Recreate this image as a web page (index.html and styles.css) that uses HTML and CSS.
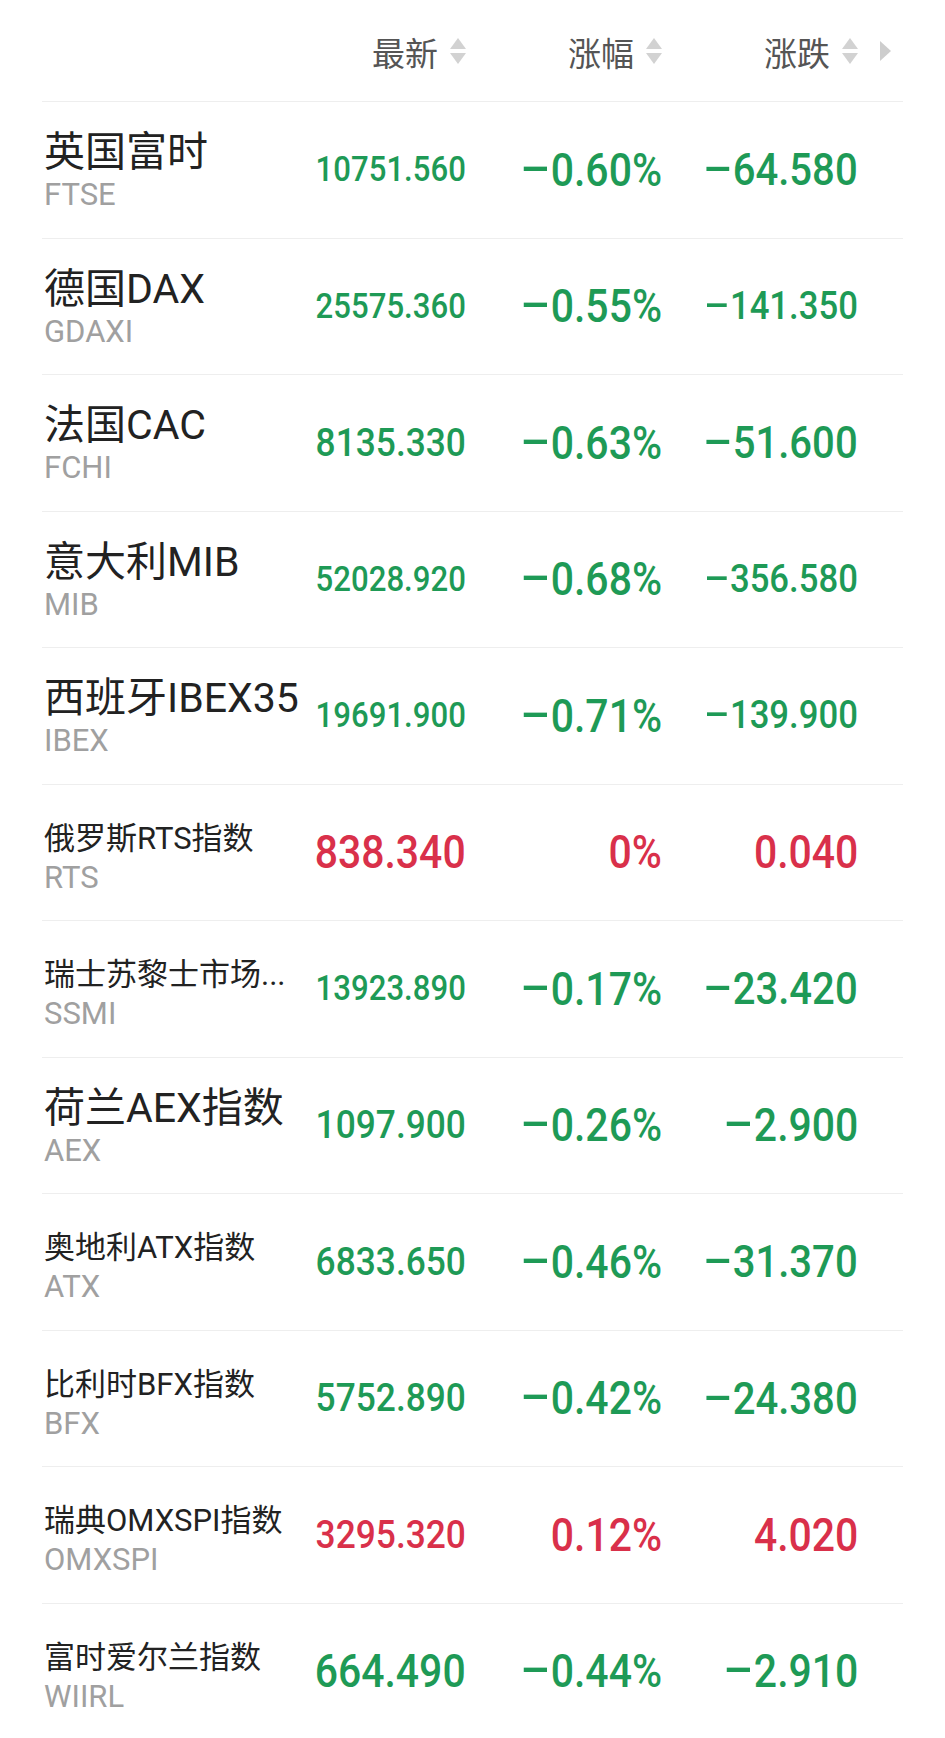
FILE: index.html
```html
<!DOCTYPE html>
<html lang="zh-CN">
<head>
<meta charset="utf-8">
<title>欧洲股指</title>
<link rel="stylesheet" href="styles.css">
</head>
<body>
<div class="board">
  <div class="header">
    <div></div>
    <div class="hcell"><span>最新</span><svg class="sort" viewBox="0 0 18 26" width="18" height="26"><polygon points="9,0 17,11 1,11"/><polygon points="1,15 17,15 9,26"/></svg></div>
    <div class="hcell"><span>涨幅</span><svg class="sort" viewBox="0 0 18 26" width="18" height="26"><polygon points="9,0 17,11 1,11"/><polygon points="1,15 17,15 9,26"/></svg></div>
    <div class="hcell"><span>涨跌</span><svg class="sort" viewBox="0 0 18 26" width="18" height="26"><polygon points="9,0 17,11 1,11"/><polygon points="1,15 17,15 9,26"/></svg></div>
    <svg class="more" viewBox="0 0 11 20" width="11" height="20"><polygon points="0,0 11,10 0,20"/></svg>
  </div>

  <div class="row down">
    <div class="title"><div class="name">英国富时</div><div class="code">FTSE</div></div>
    <div class="cell"><span class="v fs35">10751.560</span></div>
    <div class="cell"><span class="v"><span class="m">-</span>0.60%</span></div>
    <div class="cell"><span class="v fs45"><span class="m">-</span>64.580</span></div>
  </div>

  <div class="row down">
    <div class="title"><div class="name">德国DAX</div><div class="code">GDAXI</div></div>
    <div class="cell"><span class="v fs35">25575.360</span></div>
    <div class="cell"><span class="v"><span class="m">-</span>0.55%</span></div>
    <div class="cell"><span class="v fs39"><span class="m">-</span>141.350</span></div>
  </div>

  <div class="row down">
    <div class="title"><div class="name">法国CAC</div><div class="code">FCHI</div></div>
    <div class="cell"><span class="v fs40">8135.330</span></div>
    <div class="cell"><span class="v"><span class="m">-</span>0.63%</span></div>
    <div class="cell"><span class="v fs45"><span class="m">-</span>51.600</span></div>
  </div>

  <div class="row down">
    <div class="title"><div class="name">意大利MIB</div><div class="code">MIB</div></div>
    <div class="cell"><span class="v fs35">52028.920</span></div>
    <div class="cell"><span class="v"><span class="m">-</span>0.68%</span></div>
    <div class="cell"><span class="v fs39"><span class="m">-</span>356.580</span></div>
  </div>

  <div class="row down">
    <div class="title"><div class="name">西班牙IBEX35</div><div class="code">IBEX</div></div>
    <div class="cell"><span class="v fs35">19691.900</span></div>
    <div class="cell"><span class="v"><span class="m">-</span>0.71%</span></div>
    <div class="cell"><span class="v fs39"><span class="m">-</span>139.900</span></div>
  </div>

  <div class="row up">
    <div class="title"><div class="name sm">俄罗斯RTS指数</div><div class="code">RTS</div></div>
    <div class="cell"><span class="v">838.340</span></div>
    <div class="cell"><span class="v">0%</span></div>
    <div class="cell"><span class="v">0.040</span></div>
  </div>

  <div class="row down">
    <div class="title"><div class="name sm">瑞士苏黎士市场...</div><div class="code">SSMI</div></div>
    <div class="cell"><span class="v fs35">13923.890</span></div>
    <div class="cell"><span class="v"><span class="m">-</span>0.17%</span></div>
    <div class="cell"><span class="v fs45"><span class="m">-</span>23.420</span></div>
  </div>

  <div class="row down">
    <div class="title"><div class="name">荷兰AEX指数</div><div class="code">AEX</div></div>
    <div class="cell"><span class="v fs40">1097.900</span></div>
    <div class="cell"><span class="v"><span class="m">-</span>0.26%</span></div>
    <div class="cell"><span class="v"><span class="m">-</span>2.900</span></div>
  </div>

  <div class="row down">
    <div class="title"><div class="name sm">奥地利ATX指数</div><div class="code">ATX</div></div>
    <div class="cell"><span class="v fs40">6833.650</span></div>
    <div class="cell"><span class="v"><span class="m">-</span>0.46%</span></div>
    <div class="cell"><span class="v fs45"><span class="m">-</span>31.370</span></div>
  </div>

  <div class="row down">
    <div class="title"><div class="name sm">比利时BFX指数</div><div class="code">BFX</div></div>
    <div class="cell"><span class="v fs40">5752.890</span></div>
    <div class="cell"><span class="v"><span class="m">-</span>0.42%</span></div>
    <div class="cell"><span class="v fs45"><span class="m">-</span>24.380</span></div>
  </div>

  <div class="row up">
    <div class="title"><div class="name sm">瑞典OMXSPI指数</div><div class="code">OMXSPI</div></div>
    <div class="cell"><span class="v fs40">3295.320</span></div>
    <div class="cell"><span class="v">0.12%</span></div>
    <div class="cell"><span class="v">4.020</span></div>
  </div>

  <div class="row down">
    <div class="title"><div class="name sm">富时爱尔兰指数</div><div class="code">WIIRL</div></div>
    <div class="cell"><span class="v">664.490</span></div>
    <div class="cell"><span class="v"><span class="m">-</span>0.44%</span></div>
    <div class="cell"><span class="v"><span class="m">-</span>2.910</span></div>
  </div>
</div>
</body>
</html>
```

FILE: styles.css
```css
html, body {
  margin: 0;
  padding: 0;
  background: #ffffff;
}

body {
  width: 945px;
  font-family: "Roboto", "Noto Sans CJK SC", sans-serif;
  color: #222222;
}

.board {
  margin: 0 42px;
}

.header,
.row {
  display: grid;
  grid-template-columns: 274px 148px 196px 196px 1fr;
  align-items: center;
  padding-left: 2px;
}

.header {
  height: 101px;
}

.hcell {
  display: flex;
  align-items: center;
  justify-content: flex-end;
  gap: 11px;
  font-family: "Noto Sans CJK SC", sans-serif;
  font-size: 33px;
  line-height: 40px;
  color: #555555;
}

.hcell span {
  padding-top: 2px;
}

.sort {
  display: block;
  fill: #d2d2d2;
  margin-right: -1px;
}

.more {
  display: block;
  fill: #cdcdcd;
  margin-left: 22px;
}

.row {
  height: 136.5px;
  box-sizing: border-box;
  border-top: 1px solid #eeeeee;
}

.title {
  display: flex;
  flex-direction: column;
  white-space: nowrap;
}

.name {
  height: 48px;
  box-sizing: border-box;
  font-size: 41px;
  line-height: 52px;
  color: #222222;
}

.name.sm {
  font-size: 31px;
  line-height: 40px;
  padding-top: 10px;
}

.code {
  margin-top: 3px;
  font-size: 31px;
  line-height: 36px;
  color: #a0a0a0;
}

.cell {
  display: flex;
  justify-content: flex-end;
  align-items: center;
  white-space: nowrap;
}

.v {
  display: inline-block;
  font-family: "Roboto", sans-serif;
  font-weight: 500;
  font-size: 46px;
  line-height: 1;
  transform: scaleX(0.89);
  transform-origin: 100% 50%;
}

.v.fs35 { font-size: 35px; }
.v.fs39 { font-size: 39px; }
.v.fs40 { font-size: 39.7px; }
.v.fs45 { font-size: 45px; }

.m {
  display: inline-block;
  margin: 0 0.2em 0 0.155em;
  transform: translateY(-0.06em) scaleX(2.2);
}

.down .v { color: #1e9a56; }
.up .v { color: #d9304a; }
```
